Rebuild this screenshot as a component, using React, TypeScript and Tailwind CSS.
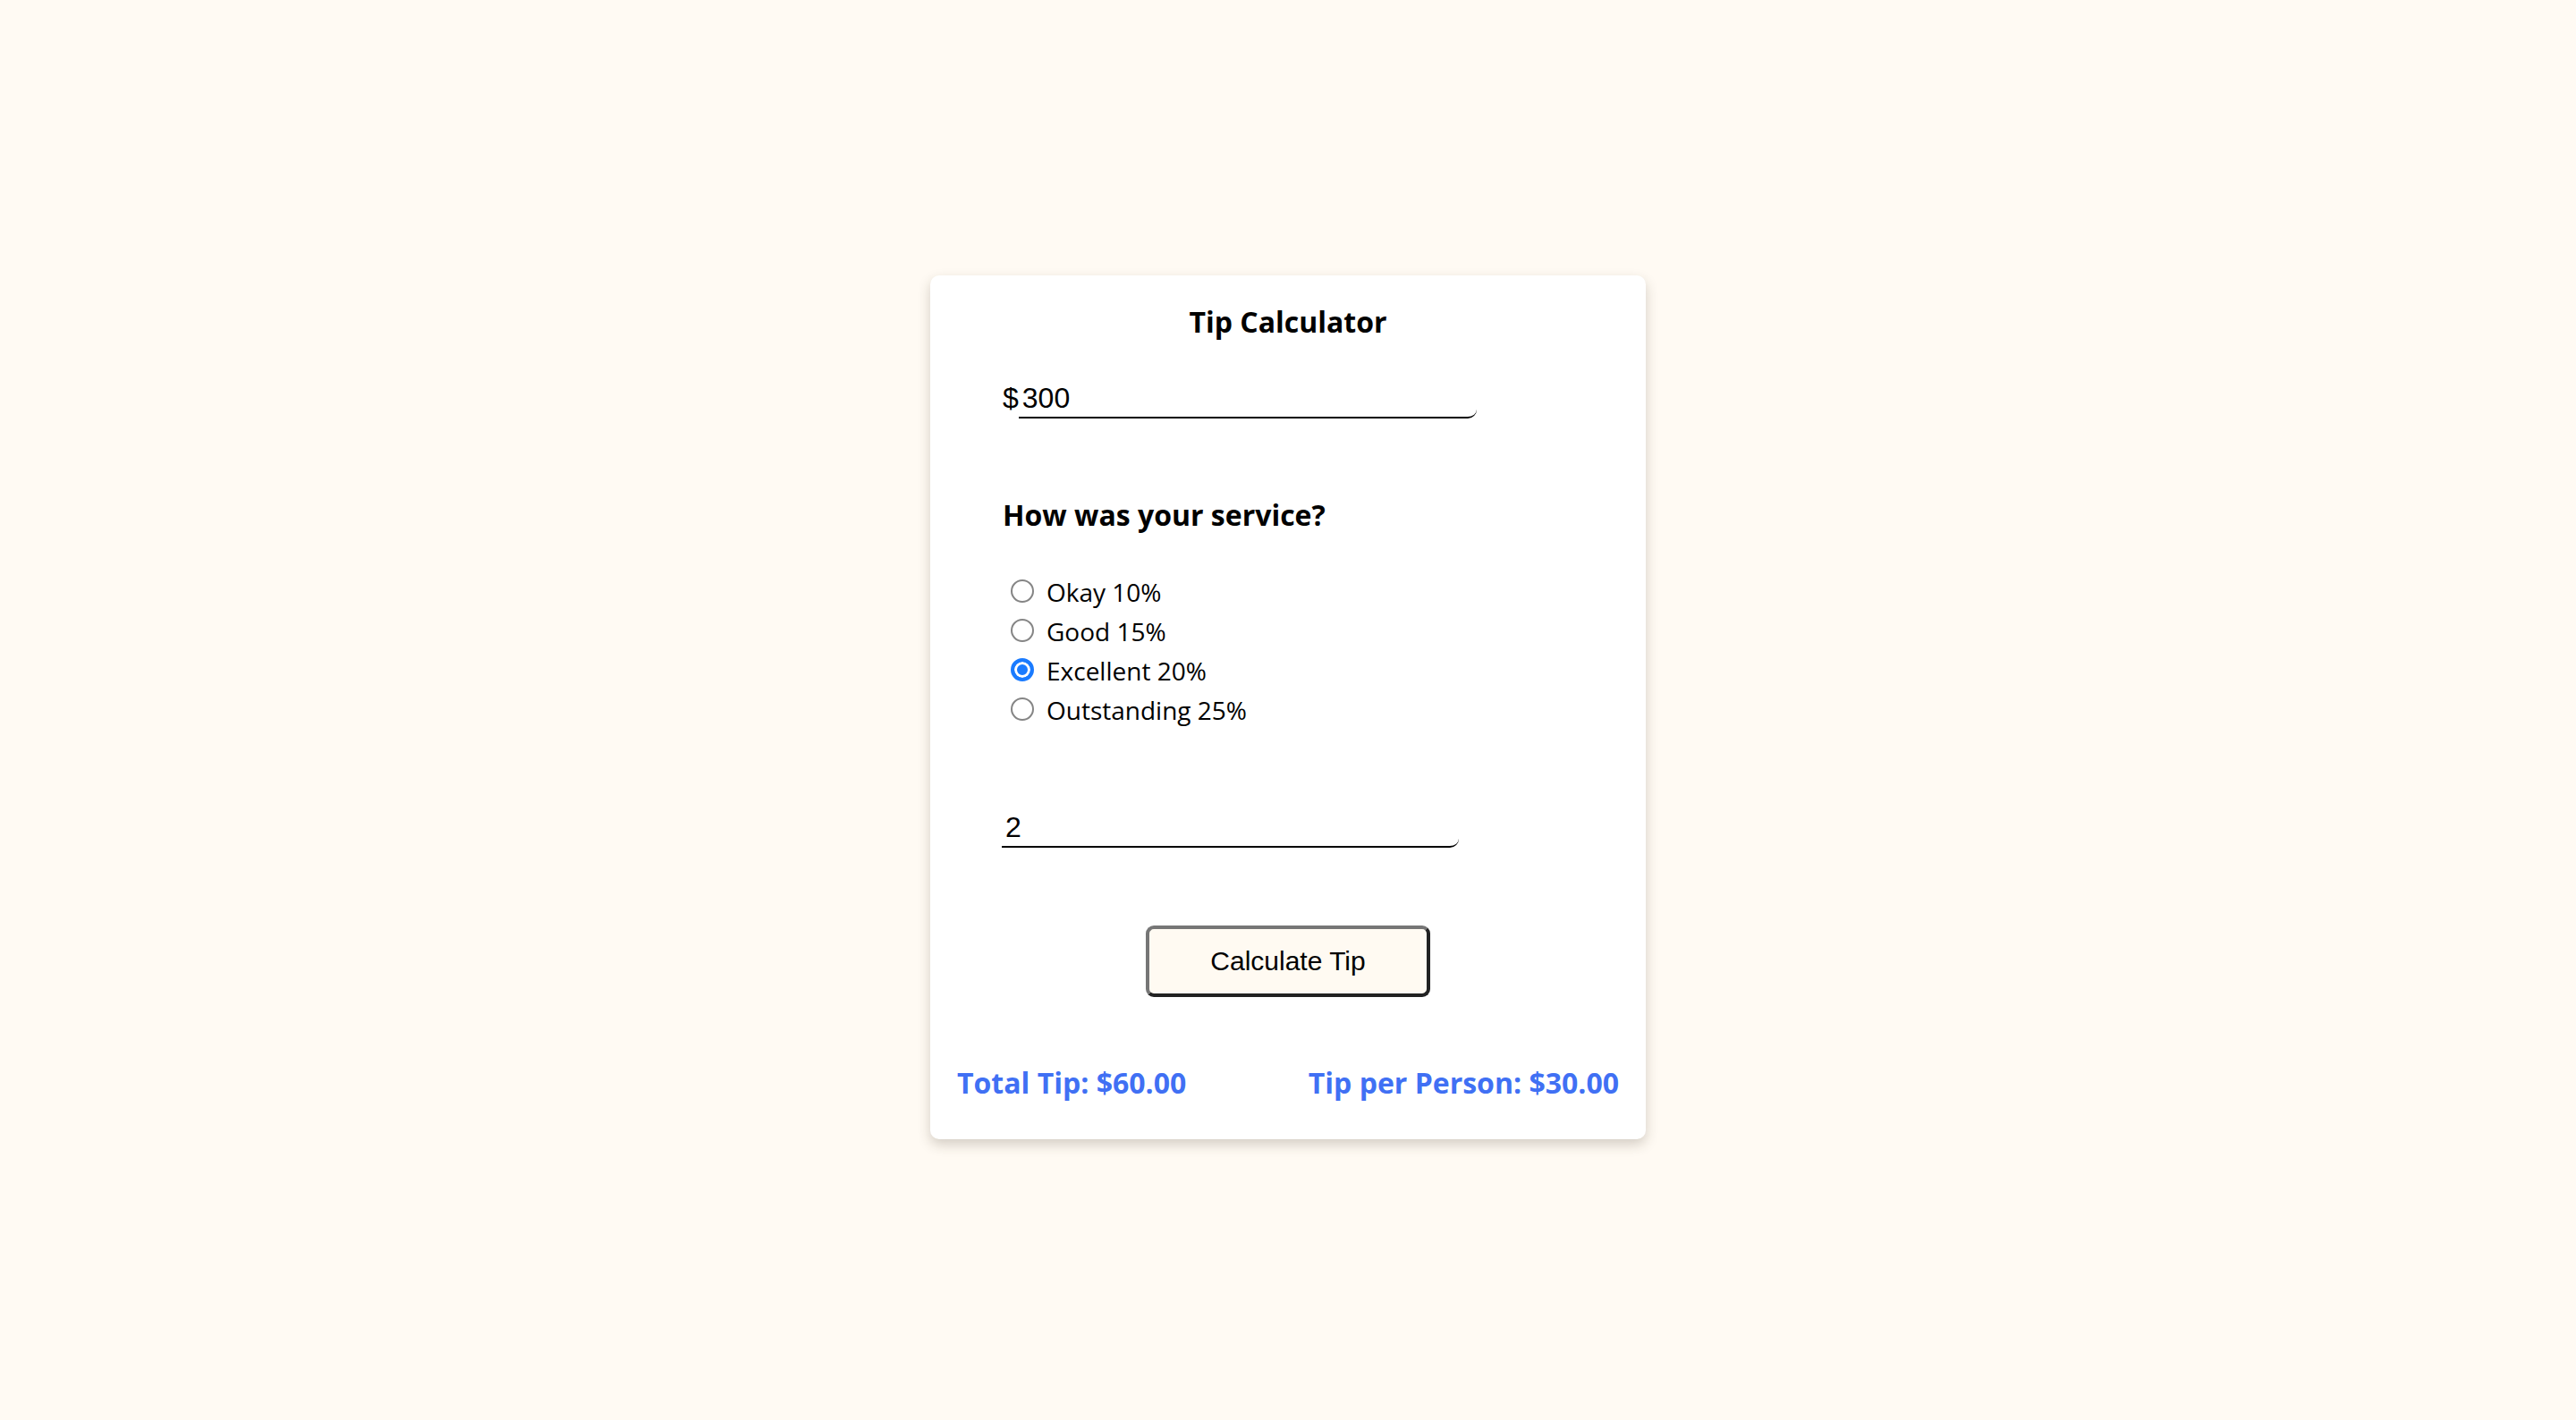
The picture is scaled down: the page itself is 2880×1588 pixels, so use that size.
import { useState } from "react";

const options = [
  { label: "Okay 10%", value: 0.1 },
  { label: "Good 15%", value: 0.15 },
  { label: "Excellent 20%", value: 0.2 },
  { label: "Outstanding 25%", value: 0.25 },
];

export default function App() {
  const [bill, setBill] = useState("300");
  const [rate, setRate] = useState(0.2);
  const [people, setPeople] = useState("2");
  const [result, setResult] = useState({ total: 60, each: 30 });

  const calculate = () => {
    const total = (parseFloat(bill) || 0) * rate;
    const n = parseInt(people) || 1;
    setResult({ total, each: total / n });
  };

  return (
    <div className="min-h-screen bg-[#fffaf3] flex items-center justify-center pb-[7px] font-['Open_Sans',sans-serif] text-black">
      <div className="w-[800px] bg-white rounded-[10px] shadow-[0_6px_14px_rgba(60,50,30,0.22)] pt-[30px] pb-[41px]">
        <h1 className="text-center text-[32px] leading-[44px] font-bold">Tip Calculator</h1>

        <div className="mt-[43px] pl-[81px] flex items-end font-['Liberation_Sans',Arial,sans-serif] text-[32px]">
          <span className="leading-[37px] pb-[4px]">$</span>
          <input
            value={bill}
            onChange={(e) => setBill(e.target.value)}
            className="w-[512px] px-[4px] py-[2px] leading-[37px] border-b-2 border-black rounded-br-[10px] outline-none bg-transparent"
          />
        </div>

        <h2 className="mt-[86px] pl-[81px] text-[32px] leading-[44px] font-bold">How was your service?</h2>

        <div className="mt-[41px] pl-[90px] flex flex-col">
          {options.map((o) => (
            <label key={o.label} className="h-[44px] flex items-center gap-[14px] text-[28px] cursor-pointer">
              <input
                type="radio"
                name="service"
                checked={rate === o.value}
                onChange={() => setRate(o.value)}
                className="appearance-none shrink-0 w-[26px] h-[26px] rounded-full border-2 border-[#858585] bg-white checked:border-[4px] checked:border-[#1a7bff] checked:bg-[#1a7bff] checked:shadow-[inset_0_0_0_3px_white]"
              />
              <span className="leading-[44px] pt-[3px]">{o.label}</span>
            </label>
          ))}
        </div>

        <div className="mt-[90px] pl-[80px]">
          <input
            value={people}
            onChange={(e) => setPeople(e.target.value)}
            className="w-[511px] px-[4px] py-[2px] font-['Liberation_Sans',Arial,sans-serif] text-[32px] leading-[37px] border-b-2 border-black rounded-br-[10px] outline-none bg-transparent"
          />
        </div>

        <div className="mt-[87px] flex justify-center">
          <button
            onClick={calculate}
            className="w-[318px] h-[80px] rounded-[9px] border-4 border-t-[#767676] border-l-[#767676] border-b-[#222222] border-r-[#222222] bg-[#fffaf2] font-['Liberation_Sans',Arial,sans-serif] text-[30px]"
          >
            Calculate Tip
          </button>
        </div>

        <div className="mt-[74px] px-[30px] flex justify-between text-[32px] leading-[44px] font-bold text-[#4070f4]">
          <span>Total Tip: ${result.total.toFixed(2)}</span>
          <span>Tip per Person: ${result.each.toFixed(2)}</span>
        </div>
      </div>
    </div>
  );
}
